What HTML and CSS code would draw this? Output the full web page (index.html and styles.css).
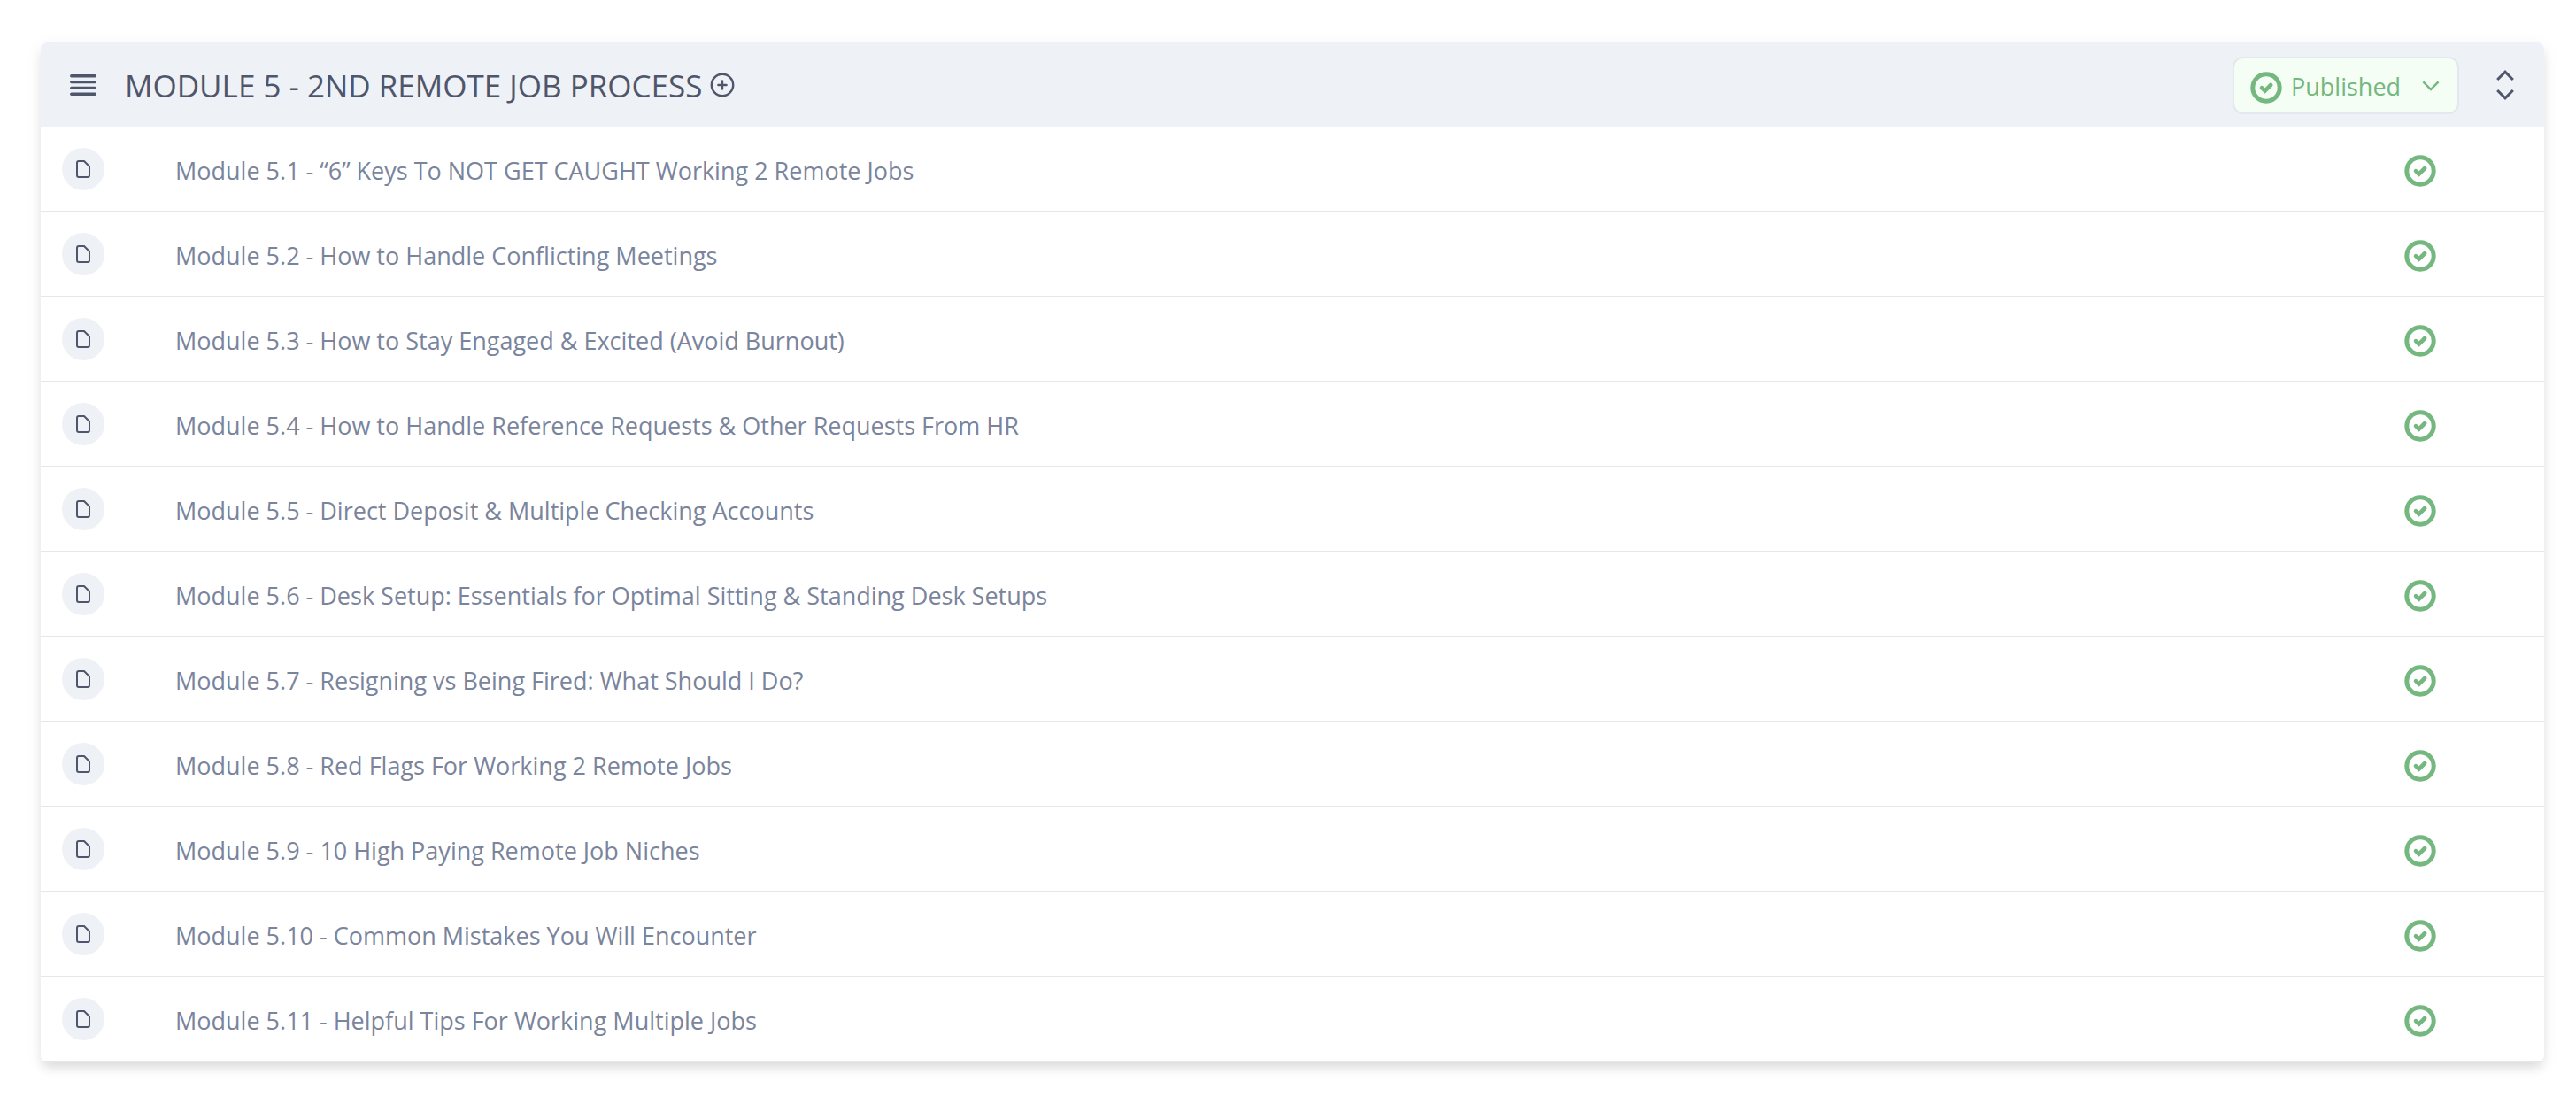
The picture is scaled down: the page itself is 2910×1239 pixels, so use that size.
FILE: index.html
```html
<!DOCTYPE html>
<html lang="en">
<head>
  <meta charset="UTF-8">
  <meta name="viewport" content="width=device-width, initial-scale=1.0">
  <title>Module 5</title>
  <link rel="stylesheet" href="styles.css">
</head>
<body>
  <!-- shared icons -->
  <svg class="sprite" aria-hidden="true">
    <symbol id="icon-doc" viewBox="0 0 16 20">
      <path d="M3 1h6l6 6v10a2 2 0 0 1-2 2H3a2 2 0 0 1-2-2V3a2 2 0 0 1 2-2z" fill="none" stroke="currentColor" stroke-width="2" stroke-linejoin="round"/>
    </symbol>
    <symbol id="icon-check" viewBox="0 0 36 36">
      <circle cx="18" cy="18" r="15.2" fill="none" stroke="currentColor" stroke-width="5"/>
      <path d="M13 18.2l3.6 3.4 6.6-6.6" fill="none" stroke="currentColor" stroke-width="4.6" stroke-linecap="round"/>
    </symbol>
  </svg>

  <section class="module">
    <header class="module-header">
      <button class="icon-btn" type="button" aria-label="Reorder">
        <svg width="30" height="24" viewBox="0 0 30 24" fill="none" stroke="currentColor" stroke-width="3.4" stroke-linecap="round">
          <path d="M1.7 1.8h26.6M1.7 8.6h26.6M1.7 15.4h26.6M1.7 22.2h26.6"/>
        </svg>
      </button>
      <h1 class="module-title">MODULE 5 - 2ND REMOTE JOB PROCESS</h1>
      <button class="icon-btn" type="button" aria-label="Add lesson">
        <svg width="28" height="28" viewBox="0 0 28 28" fill="none" stroke="currentColor" stroke-width="2.4" stroke-linecap="round">
          <circle cx="14" cy="14" r="12.2"/>
          <path d="M14 9.4v9.2M9.4 14h9.2"/>
        </svg>
      </button>
      <div class="status">
        <svg class="status-check" width="36" height="36"><use href="#icon-check"/></svg>
        <select class="status-select" aria-label="Status">
          <option>Published</option>
          <option>Draft</option>
        </select>
        <svg class="status-arrow" width="20" height="12" viewBox="0 0 20 12" fill="none" stroke="currentColor" stroke-width="2.4">
          <path d="M1.4 1.4L10 10l8.6-8.6"/>
        </svg>
      </div>
      <button class="icon-btn" type="button" aria-label="Collapse module">
        <svg width="20" height="36" viewBox="0 0 20 36" fill="none" stroke="currentColor" stroke-width="3">
          <path d="M1.2 12L10 3.2l8.8 8.8M1.2 24l8.8 8.8 8.8-8.8"/>
        </svg>
      </button>
    </header>

    <ul class="lessons">
      <li class="lesson">
        <span class="lesson-icon"><svg width="16" height="20"><use href="#icon-doc"/></svg></span>
        <a class="lesson-title" href="#">Module 5.1 - “6” Keys To NOT GET CAUGHT Working 2 Remote Jobs</a>
        <svg class="lesson-check" width="36" height="36"><use href="#icon-check"/></svg>
      </li>
      <li class="lesson">
        <span class="lesson-icon"><svg width="16" height="20"><use href="#icon-doc"/></svg></span>
        <a class="lesson-title" href="#">Module 5.2 - How to Handle Conflicting Meetings</a>
        <svg class="lesson-check" width="36" height="36"><use href="#icon-check"/></svg>
      </li>
      <li class="lesson">
        <span class="lesson-icon"><svg width="16" height="20"><use href="#icon-doc"/></svg></span>
        <a class="lesson-title" href="#">Module 5.3 - How to Stay Engaged &amp; Excited (Avoid Burnout)</a>
        <svg class="lesson-check" width="36" height="36"><use href="#icon-check"/></svg>
      </li>
      <li class="lesson">
        <span class="lesson-icon"><svg width="16" height="20"><use href="#icon-doc"/></svg></span>
        <a class="lesson-title" href="#">Module 5.4 - How to Handle Reference Requests &amp; Other Requests From HR</a>
        <svg class="lesson-check" width="36" height="36"><use href="#icon-check"/></svg>
      </li>
      <li class="lesson">
        <span class="lesson-icon"><svg width="16" height="20"><use href="#icon-doc"/></svg></span>
        <a class="lesson-title" href="#">Module 5.5 - Direct Deposit &amp; Multiple Checking Accounts</a>
        <svg class="lesson-check" width="36" height="36"><use href="#icon-check"/></svg>
      </li>
      <li class="lesson">
        <span class="lesson-icon"><svg width="16" height="20"><use href="#icon-doc"/></svg></span>
        <a class="lesson-title" href="#">Module 5.6 - Desk Setup: Essentials for Optimal Sitting &amp; Standing Desk Setups</a>
        <svg class="lesson-check" width="36" height="36"><use href="#icon-check"/></svg>
      </li>
      <li class="lesson">
        <span class="lesson-icon"><svg width="16" height="20"><use href="#icon-doc"/></svg></span>
        <a class="lesson-title" href="#">Module 5.7 - Resigning vs Being Fired: What Should I Do?</a>
        <svg class="lesson-check" width="36" height="36"><use href="#icon-check"/></svg>
      </li>
      <li class="lesson">
        <span class="lesson-icon"><svg width="16" height="20"><use href="#icon-doc"/></svg></span>
        <a class="lesson-title" href="#">Module 5.8 - Red Flags For Working 2 Remote Jobs</a>
        <svg class="lesson-check" width="36" height="36"><use href="#icon-check"/></svg>
      </li>
      <li class="lesson">
        <span class="lesson-icon"><svg width="16" height="20"><use href="#icon-doc"/></svg></span>
        <a class="lesson-title" href="#">Module 5.9 - 10 High Paying Remote Job Niches</a>
        <svg class="lesson-check" width="36" height="36"><use href="#icon-check"/></svg>
      </li>
      <li class="lesson">
        <span class="lesson-icon"><svg width="16" height="20"><use href="#icon-doc"/></svg></span>
        <a class="lesson-title" href="#">Module 5.10 - Common Mistakes You Will Encounter</a>
        <svg class="lesson-check" width="36" height="36"><use href="#icon-check"/></svg>
      </li>
      <li class="lesson">
        <span class="lesson-icon"><svg width="16" height="20"><use href="#icon-doc"/></svg></span>
        <a class="lesson-title" href="#">Module 5.11 - Helpful Tips For Working Multiple Jobs</a>
        <svg class="lesson-check" width="36" height="36"><use href="#icon-check"/></svg>
      </li>
    </ul>
  </section>
</body>
</html>
```
FILE: styles.css
```css
* {
  box-sizing: border-box;
}

body {
  margin: 0;
  padding: 48px 36px 36px 46px;
  background: #fff;
  color: #4f566b;
  font-family: "Segoe UI", "Open Sans", "Noto Sans", sans-serif;
  font-size: 27px;
}

.sprite {
  position: absolute;
  width: 0;
  height: 0;
}

.module {
  border-radius: 8px;
  background: #fff;
  box-shadow: 0 8px 12px -2px rgba(0, 0, 0, 0.1), 0 4px 20px rgba(0, 0, 0, 0.06);
  overflow: hidden;
}

.module-header {
  display: flex;
  align-items: center;
  min-height: 96px;
  padding: 0 34px 0 33px;
  background: #eef1f6;
}

.icon-btn {
  display: flex;
  padding: 0;
  border: 0;
  background: none;
  color: inherit;
  cursor: pointer;
}

.module-title {
  margin: 0 9px 0 32px;
  padding-top: 2px;
  font-size: 35px;
  font-weight: 400;
  line-height: 48px;
}

.status {
  position: relative;
  margin-left: auto;
  margin-right: 42px;
  color: #74b77f;
}

.status-select {
  display: block;
  width: 256px;
  height: 65px;
  padding: 2px 48px 0 64px;
  border: 2px solid #e3e8ee;
  border-radius: 12px;
  background: #f4fef4;
  color: inherit;
  font: inherit;
  appearance: none;
  cursor: pointer;
}

/* icons sit on top of the select */
.status-check,
.status-arrow {
  position: absolute;
  pointer-events: none;
}

.status-check {
  top: 17px;
  left: 20px;
}

.status-arrow {
  top: 27px;
  right: 22px;
}

.lessons {
  margin: 0;
  padding: 0;
  list-style: none;
}

.lesson {
  display: flex;
  align-items: center;
  min-height: 96px;
  padding: 0 122px 0 24px;
  border-bottom: 2px solid #e3e8ee;
}

.lesson-icon {
  display: flex;
  align-items: center;
  justify-content: center;
  width: 48px;
  height: 48px;
  border-radius: 50%;
  background: #eef1f6;
}

.lesson-title {
  margin-left: 80px;
  padding-top: 2px;
  color: #7a849c;
  text-decoration: none;
}

.lesson-check {
  margin-top: 4px;
  margin-left: auto;
  color: #74b77f;
}
```
